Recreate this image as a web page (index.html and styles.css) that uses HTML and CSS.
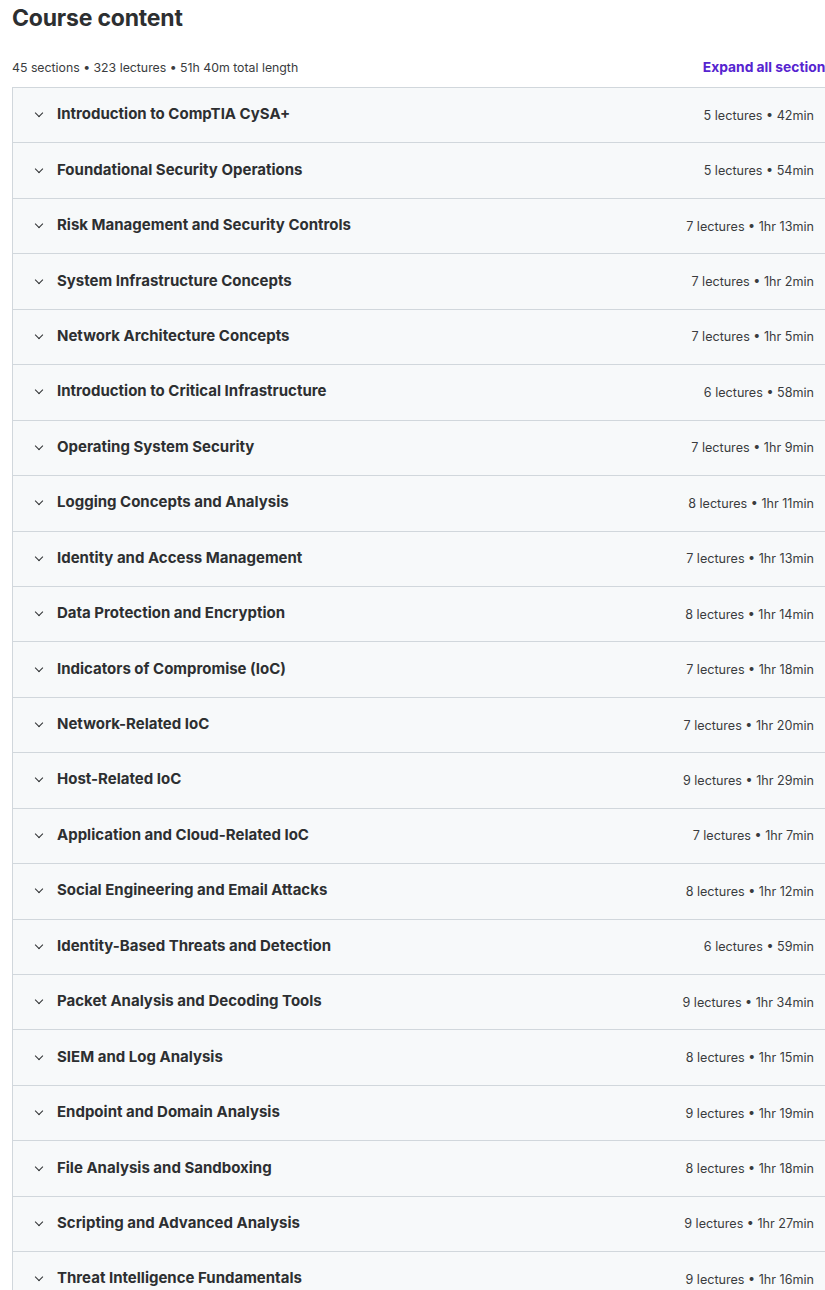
FILE: index.html
```html
<!DOCTYPE html>
<html>
<head>
    <title>Course content</title>
    <link rel="stylesheet" href="styles.css">
</head>
<body>
    <div class="curriculum">
        <h2>Course content</h2>
        <div class="summary">
            <span>45 sections • 323 lectures • 51h 40m total length</span>
            <a href="#" class="expand-all">Expand all sections</a>
        </div>

        <div class="sections">
            <div class="section"><span class="chevron"></span><span class="title">Introduction to CompTIA CySA+</span><span class="meta">5 lectures • 42min</span></div>
            <div class="section"><span class="chevron"></span><span class="title">Foundational Security Operations</span><span class="meta">5 lectures • 54min</span></div>
            <div class="section"><span class="chevron"></span><span class="title">Risk Management and Security Controls</span><span class="meta">7 lectures • 1hr 13min</span></div>
            <div class="section"><span class="chevron"></span><span class="title">System Infrastructure Concepts</span><span class="meta">7 lectures • 1hr 2min</span></div>
            <div class="section"><span class="chevron"></span><span class="title">Network Architecture Concepts</span><span class="meta">7 lectures • 1hr 5min</span></div>
            <div class="section"><span class="chevron"></span><span class="title">Introduction to Critical Infrastructure</span><span class="meta">6 lectures • 58min</span></div>
            <div class="section"><span class="chevron"></span><span class="title">Operating System Security</span><span class="meta">7 lectures • 1hr 9min</span></div>
            <div class="section"><span class="chevron"></span><span class="title">Logging Concepts and Analysis</span><span class="meta">8 lectures • 1hr 11min</span></div>
            <div class="section"><span class="chevron"></span><span class="title">Identity and Access Management</span><span class="meta">7 lectures • 1hr 13min</span></div>
            <div class="section"><span class="chevron"></span><span class="title">Data Protection and Encryption</span><span class="meta">8 lectures • 1hr 14min</span></div>
            <div class="section"><span class="chevron"></span><span class="title">Indicators of Compromise (IoC)</span><span class="meta">7 lectures • 1hr 18min</span></div>
            <div class="section"><span class="chevron"></span><span class="title">Network-Related IoC</span><span class="meta">7 lectures • 1hr 20min</span></div>
            <div class="section"><span class="chevron"></span><span class="title">Host-Related IoC</span><span class="meta">9 lectures • 1hr 29min</span></div>
            <div class="section"><span class="chevron"></span><span class="title">Application and Cloud-Related IoC</span><span class="meta">7 lectures • 1hr 7min</span></div>
            <div class="section"><span class="chevron"></span><span class="title">Social Engineering and Email Attacks</span><span class="meta">8 lectures • 1hr 12min</span></div>
            <div class="section"><span class="chevron"></span><span class="title">Identity-Based Threats and Detection</span><span class="meta">6 lectures • 59min</span></div>
            <div class="section"><span class="chevron"></span><span class="title">Packet Analysis and Decoding Tools</span><span class="meta">9 lectures • 1hr 34min</span></div>
            <div class="section"><span class="chevron"></span><span class="title">SIEM and Log Analysis</span><span class="meta">8 lectures • 1hr 15min</span></div>
            <div class="section"><span class="chevron"></span><span class="title">Endpoint and Domain Analysis</span><span class="meta">9 lectures • 1hr 19min</span></div>
            <div class="section"><span class="chevron"></span><span class="title">File Analysis and Sandboxing</span><span class="meta">8 lectures • 1hr 18min</span></div>
            <div class="section"><span class="chevron"></span><span class="title">Scripting and Advanced Analysis</span><span class="meta">9 lectures • 1hr 27min</span></div>
            <div class="section"><span class="chevron"></span><span class="title">Threat Intelligence Fundamentals</span><span class="meta">9 lectures • 1hr 16min</span></div>
        </div>
    </div>
</body>
</html>
```

FILE: styles.css
```css
body {
    font-family: Inter, "Noto Sans", sans-serif;
    margin: 0;
    padding-left: 12px;
    color: #2d2f31;
    background-color: #fff;
    overflow: hidden;
}

.curriculum {
    width: 822px;
}

h2 {
    margin: 0;
    font-size: 23px;
    font-weight: 700;
    line-height: 36px;
    letter-spacing: -0.2px;
}

.summary {
    display: flex;
    justify-content: space-between;
    align-items: flex-end;
    box-sizing: border-box;
    height: 51px;
    padding-bottom: 12px;
    font-size: 12.3px;
    line-height: 15px;
    color: #3a3c3e;
}

.expand-all {
    color: #5624d0;
    font-weight: 700;
    font-size: 13.8px;
    text-decoration: none;
    padding-right: 1px;
}

.sections {
    border-left: 1px solid #d1d7dc;
    border-right: 1px solid #d1d7dc;
}

.section {
    display: flex;
    align-items: center;
    box-sizing: border-box;
    height: 55.45px;
    padding: 0 19px 0 22px;
    border-top: 1px solid #d1d7dc;
    background-color: #f7f9fa;
}

.chevron {
    width: 5px;
    height: 5px;
    border-right: 1.1px solid #2d2f31;
    border-bottom: 1.1px solid #2d2f31;
    transform: rotate(45deg);
    margin: -4px 15px 0 1px;
}

.title {
    flex: 1;
    font-size: 15px;
    font-weight: 700;
    padding-bottom: 3px;
}

.meta {
    font-size: 12.6px;
    color: #3a3c3e;
}
```
